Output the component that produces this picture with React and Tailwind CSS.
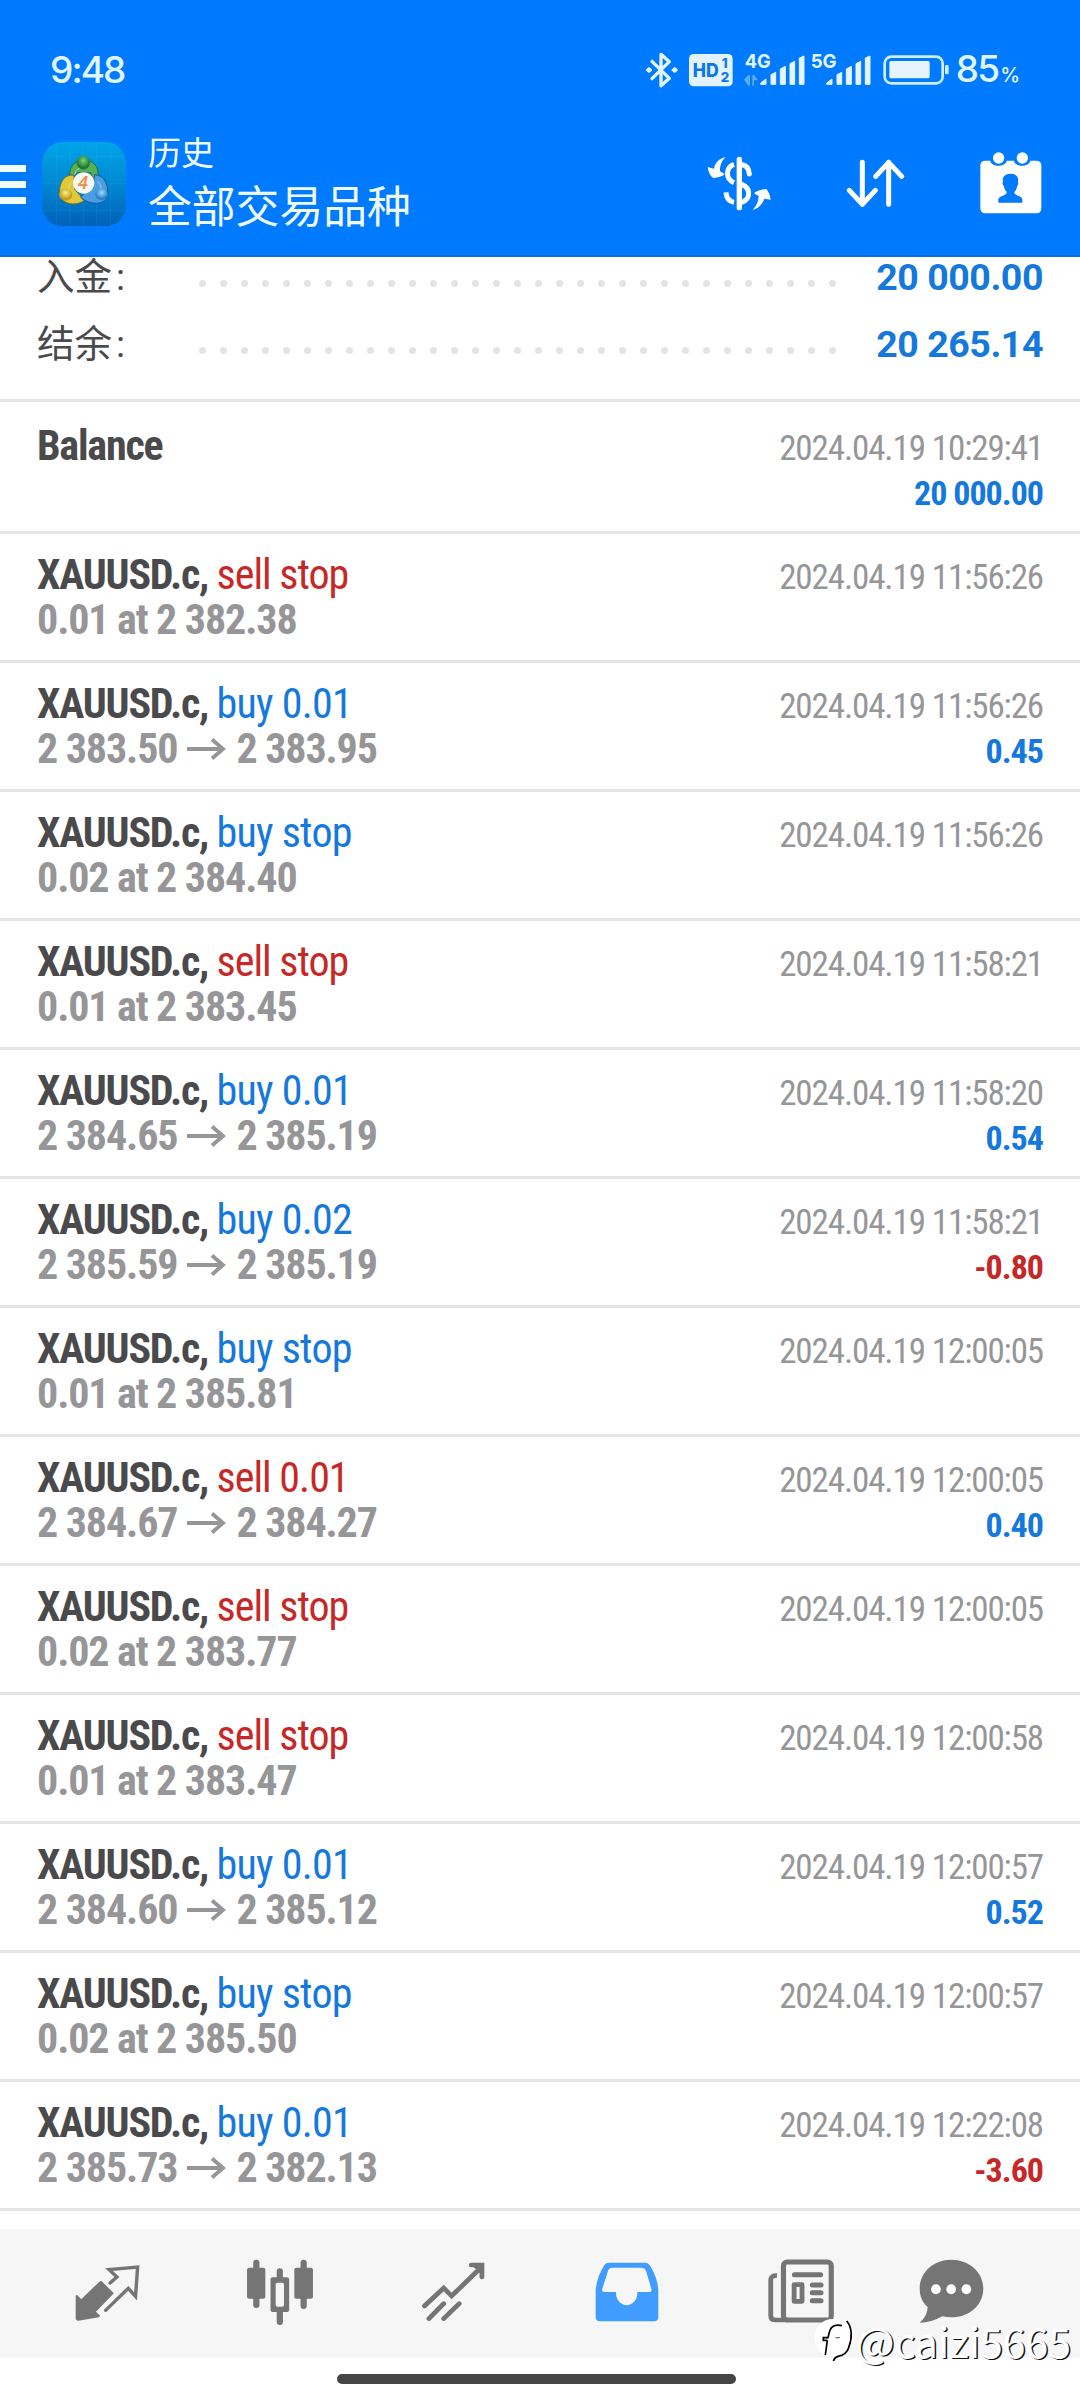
const deals = [
  { side: "sell", label: "sell stop", detail: "0.01 at 2 382.38", time: "2024.04.19 11:56:26" },
  { side: "buy", label: "buy 0.01", from: "2 383.50", to: "2 383.95", time: "2024.04.19 11:56:26", profit: "0.45" },
  { side: "buy", label: "buy stop", detail: "0.02 at 2 384.40", time: "2024.04.19 11:56:26" },
  { side: "sell", label: "sell stop", detail: "0.01 at 2 383.45", time: "2024.04.19 11:58:21" },
  { side: "buy", label: "buy 0.01", from: "2 384.65", to: "2 385.19", time: "2024.04.19 11:58:20", profit: "0.54" },
  { side: "buy", label: "buy 0.02", from: "2 385.59", to: "2 385.19", time: "2024.04.19 11:58:21", profit: "-0.80" },
  { side: "buy", label: "buy stop", detail: "0.01 at 2 385.81", time: "2024.04.19 12:00:05" },
  { side: "sell", label: "sell 0.01", from: "2 384.67", to: "2 384.27", time: "2024.04.19 12:00:05", profit: "0.40" },
  { side: "sell", label: "sell stop", detail: "0.02 at 2 383.77", time: "2024.04.19 12:00:05" },
  { side: "sell", label: "sell stop", detail: "0.01 at 2 383.47", time: "2024.04.19 12:00:58" },
  { side: "buy", label: "buy 0.01", from: "2 384.60", to: "2 385.12", time: "2024.04.19 12:00:57", profit: "0.52" },
  { side: "buy", label: "buy stop", detail: "0.02 at 2 385.50", time: "2024.04.19 12:00:57" },
  { side: "buy", label: "buy 0.01", from: "2 385.73", to: "2 382.13", time: "2024.04.19 12:22:08", profit: "-3.60" },
];

const Signal = ({ label, data }) => (
  <svg className="-mt-[8px]" width="61" height="42" viewBox="0 -24 183 126" fill="#e4f5ff">
    <text x="2" y="45" fontFamily="Inter, sans-serif" fontWeight="700" fontSize="58" textLength="78" lengthAdjust="spacingAndGlyphs">
      {label}
    </text>
    {data && <path d="M0 80 13 66V98ZM13 66H18V98H13ZM25 66H30V98H25ZM30 66 42 82H30Z" opacity="0.4" />}
    <path d="M50 94V90L66 78V94ZM81 94V65L95 58V94ZM109 94V48L124 40V94ZM138 94V32L152 25V94ZM166 94V15L180 9V94Z" strokeLinejoin="round" stroke="#e4f5ff" strokeWidth="3" />
  </svg>
);

const StatusBar = () => (
  <div className="flex h-[140px] items-center justify-between pl-[50px] pr-[60px] text-[#e0f6ff]">
    <span className="text-[37px] font-medium leading-[40px] tracking-[-1.9px]">9:48</span>
    <div className="flex items-center">
      {/* Bluetooth */}
      <svg className="mr-[-1px]" width="34" height="38" viewBox="0 0 102 114" fill="none" stroke="#e4f5ff" strokeWidth="10" strokeLinejoin="round" strokeLinecap="round">
        <path d="M21 31 73 82 48 104V10L73 32 21 83" />
        <path d="M5 57 12 51 19 57 12 63ZM82 57 89 51 96 57 89 63Z" fill="#e4f5ff" strokeWidth="5" />
      </svg>
      {/* HD badge */}
      <svg className="ml-[11px]" width="44" height="33" viewBox="0 0 132 99">
        <rect width="131" height="97" rx="14" fill="#e2f3ff" />
        <g fill="#0b78e8" fontFamily="Inter, sans-serif" fontWeight="800">
          <text x="11" y="68" fontSize="55" textLength="78" lengthAdjust="spacingAndGlyphs">HD</text>
          <text x="98" y="43" fontSize="40">1</text>
          <text x="95" y="84" fontSize="40">2</text>
        </g>
      </svg>
      <div className="ml-[11px] flex gap-[5px]">
        <Signal label="4G" data />
        <Signal label="5G" />
      </div>
      {/* Battery */}
      <svg className="ml-[12px]" width="67" height="30" viewBox="0 0 201 90">
        <rect x="5" y="5" width="174" height="80" rx="20" fill="none" stroke="#cdeeff" strokeWidth="8" />
        <rect x="19" y="18" width="121" height="52" rx="5" fill="#e6f4ff" />
        <rect x="186" y="30" width="11" height="28" rx="4" fill="#cdeeff" />
      </svg>
      <span className="ml-[6px] mt-[3px] text-[37px] font-medium leading-[40px] tracking-[-1.9px]">
        85<span className="ml-[2px] text-[20px] tracking-normal">%</span>
      </span>
    </div>
  </div>
);

const AppLogo = () => (
  <svg className="ml-4 mt-[2px]" width="84" height="84" viewBox="0 0 252 252">
    <defs>
      <linearGradient id="bg" x1="0" y1="0" x2="0" y2="1">
        <stop offset="0" stopColor="#00a5ea" />
        <stop offset="0.5" stopColor="#0088d2" />
        <stop offset="1" stopColor="#0060b8" />
      </linearGradient>
      <radialGradient id="green" cy="0.35"><stop offset="0" stopColor="#7fd070" /><stop offset="1" stopColor="#1c7a35" /></radialGradient>
      <radialGradient id="yellow" cy="0.35"><stop offset="0" stopColor="#fff08a" /><stop offset="1" stopColor="#c49a18" /></radialGradient>
      <radialGradient id="blue" cy="0.35"><stop offset="0" stopColor="#a6dcff" /><stop offset="1" stopColor="#2a80cc" /></radialGradient>
    </defs>
    <rect width="252" height="252" rx="62" fill="url(#bg)" />
    <path d="M0 44H252M0 124H252M0 205H252M44 0V252M84 0V252M124 0V252M164 0V252M205 0V252" stroke="#5ec6ff" strokeWidth="2" opacity="0.16" />
    <g strokeLinejoin="round" strokeWidth="3">
      <path d="M88 112C74 84 94 54 126 54S178 84 164 116L152 112 146 92H106Z" fill="#58ae55" stroke="#1d6b50" />
      <path d="M96 100C64 94 48 130 54 160 62 190 104 192 126 176L116 162 98 142Z" fill="#dfc83a" stroke="#6b6a2a" />
      <path d="M158 98C190 98 202 136 196 164 186 190 142 190 116 166L128 152 152 140Z" fill="#4a9fe0" stroke="#125a9c" />
    </g>
    <path d="M98 98Q104 72 126 80M82 150Q76 128 92 116M166 118Q182 132 176 150" fill="none" stroke="#d9f0c8" strokeWidth="3" opacity="0.6" />
    <ellipse cx="124" cy="62" rx="20" ry="21" fill="url(#green)" />
    <ellipse cx="71" cy="158" rx="20" ry="18" fill="url(#yellow)" />
    <ellipse cx="179" cy="157" rx="19" ry="18" fill="url(#blue)" />
    <circle cx="125" cy="123" r="32" fill="#f8f8f4" />
    <text x="123" y="142" textAnchor="middle" fontFamily="Open Sans, sans-serif" fontStyle="italic" fontWeight="600" fontSize="54" fill="#ee8c44">4</text>
  </svg>
);

const Header = () => (
  <div className="flex h-[117px] items-start border-b-2 border-[#0d6fdc]">
    <div className="mt-[25px] flex w-[26px] flex-col gap-[9px]">
      <div className="h-[7px] bg-[#f2fbff]" />
      <div className="h-[7px] bg-[#f2fbff]" />
      <div className="h-[7px] bg-[#f2fbff]" />
    </div>
    <AppLogo />
    <div className="-mt-[10px] ml-[22px] grow text-[#eefaff] [font-family:'Noto_Sans_CJK_SC',sans-serif]">
      <p className="text-[33px] leading-[42px]">历史</p>
      <p className="mt-[4px] text-[43.8px] leading-[56px]">全部交易品种</p>
    </div>
    <div className="mt-[12px] flex items-start text-white">
      {/* currency */}
      <svg className="mt-[4px]" width="64" height="55" viewBox="82 78 192 165" fill="none" stroke="currentColor" strokeWidth="16">
        <path d="M179 88V233" strokeLinecap="round" />
        <path d="M163 103C138 112 136 146 163 158M139 187C140 204 148 214 163 217" strokeWidth="15" />
        <path d="M188 104C200 106 208 116 209 132M186 163C214 174 214 208 186 217" strokeWidth="15" strokeLinecap="round" />
        <path d="M138 81C118 86 106 98 103 116L84 111C86 126 92 138 101 144 114 143 128 140 135 132L121 124C120 108 126 92 138 81Z" fill="currentColor" stroke="none" />
        <path d="M219 240C236 236 248 224 254 206L273 209C271 194 266 184 260 177 246 178 232 182 223 190L237 198C237 214 230 228 219 240Z" fill="currentColor" stroke="none" />
      </svg>
      {/* sort */}
      <svg className="ml-[75px] mt-[7px]" width="59" height="49" viewBox="498 87 177 147" fill="none" stroke="currentColor" strokeWidth="15" strokeLinecap="round" strokeLinejoin="round">
        <path d="M547 97V223M508 181 547 223 586 181M626 223V97M587 139 626 97 665 139" />
      </svg>
      {/* calendar */}
      <svg className="ml-[75px]" width="62" height="62" viewBox="899 64 186 186" fill="currentColor">
        <path d="M915 90H930C932 110 976 110 979 90H1001C1004 110 1046 110 1050 90H1068Q1083 90 1083 104V233Q1083 248 1068 248H915Q900 248 900 233V104Q900 90 915 90Z" />
        <circle cx="955" cy="82" r="17" />
        <circle cx="1026" cy="82" r="17" />
        <path d="M954 216V205C960 193 980 196 979 183 972 177 972 170 970 165 965 160 966 156 968 154 964 138 975 130 990 129 1005 129 1016 136 1013 154 1015 158 1014 162 1011 165 1009 172 1008 179 1002 184 1001 196 1020 192 1026 205V216Z" fill="#007aff" />
      </svg>
    </div>
    <div className="w-[38px]" />
  </div>
);

const SummaryRow = ({ label, value }) => (
  <div className="flex h-[67px] shrink-0 items-center pl-[37px] pr-[37px] leading-[38px]">
    <span className="w-[162px] text-[37.5px] text-[#4a4a4c] [font-family:Roboto,'Noto_Sans_CJK_SC',sans-serif]">
      {label}
      <span className="ml-[4px]">:</span>
    </span>
    <div className="mt-[14px] flex w-[637px] justify-between">
      {Array.from({ length: 31 }, (_, i) => (
        <span key={i} className="size-[7px] rounded-full bg-[#e4e4e4]" />
      ))}
    </div>
    <span className="ml-auto text-[37.5px] font-bold tracking-[-0.45px] text-[#1478dc]">{value}</span>
  </div>
);

const Arrow = () => (
  <svg className="ml-[9px] mr-[10px]" width="40" height="22" viewBox="0 0 40 22" fill="none" stroke="currentColor" strokeWidth="3.8">
    <path d="M1 11H37M26 1.5 37 11 26 20.5" />
  </svg>
);

const DealRow = ({ deal }) => (
  <div className="h-[129px] border-b-3 border-[#e4e4e4] pl-[37px] pr-[37px] pt-[18px] font-stretch-condensed">
    <div className="flex h-[45px] items-baseline justify-between leading-[45px]">
      <p className="text-[42px] font-bold tracking-[-1.2px] text-[#4a4a4c]">
        XAUUSD.c,{" "}
        <span className={deal.side === "buy" ? "font-normal tracking-[-0.75px] text-[#1478dc]" : "font-normal tracking-[-1px] text-[#c62828]"}>
          {deal.label}
        </span>
      </p>
      <p className="text-[35px] tracking-[-1.1px] text-[#969698]">{deal.time}</p>
    </div>
    <div className="flex h-[45px] items-baseline justify-between leading-[45px]">
      <p className="flex items-center text-[42px] font-bold tracking-[-1.1px] text-[#969698]">
        {deal.detail || (
          <>
            {deal.from}
            <Arrow />
            {deal.to}
          </>
        )}
      </p>
      {deal.profit && (
        <p
          className={
            deal.profit.startsWith("-")
              ? "text-[34px] font-bold tracking-[-1px] text-[#c62828]"
              : "text-[34px] font-bold tracking-[-1px] text-[#1478dc]"
          }
        >
          {deal.profit}
        </p>
      )}
    </div>
  </div>
);

const TabBar = () => (
  <div className="flex h-[129px] items-start bg-[#f6f6f6] pl-[75px] pt-[30px] text-[#757575]">
    {/* quotes */}
    <svg className="mt-[6px]" width="65" height="57" viewBox="218 226 189 171" preserveAspectRatio="none" fill="currentColor">
      <path d="M295 274 331 311 279 366 291 378 288 383 228 393Q220 393 220 386V317H225L236 329 288 277Q292 273 295 274Z" />
      <path d="M320 280 340 262 317 240 400 232 394 320 373 296 307 362" fill="none" stroke="currentColor" strokeWidth="10" strokeLinecap="round" />
    </svg>
    {/* chart */}
    <svg className="ml-[106px]" width="68" height="68" viewBox="715 208 197 204" preserveAspectRatio="none" fill="currentColor">
      <path d="M745 219V346M882 219V349M813 245V272M813 358V397" stroke="currentColor" strokeWidth="18" strokeLinecap="round" />
      <rect x="718" y="234" width="53" height="93" rx="6" />
      <rect x="855" y="234" width="54" height="93" rx="6" />
      <rect x="786" y="263" width="54" height="104" rx="6" />
      <rect x="801" y="279" width="24" height="72" rx="5" fill="#f6f6f6" />
    </svg>
    {/* trade */}
    <svg className="ml-[107px] mt-[3px]" width="64" height="61" viewBox="1222 216 186 183" preserveAspectRatio="none" fill="none" stroke="currentColor" strokeWidth="14" strokeLinecap="round">
      <path d="M1232 348 1288 294 1311 318 1395 234M1245 386 1288 341M1288 386 1333 341" />
      <path d="M1368 225H1399V261" />
      <path d="M1372 229 1396 222V252Z" fill="currentColor" stroke="none" />
    </svg>
    {/* history */}
    <svg className="ml-[110px] mt-[3px]" width="64" height="60" viewBox="160 217 187 178" preserveAspectRatio="none">
      <path fillRule="evenodd" fill="#409cff" d="M202 219H306Q316 219 321 228 344 266 345 303V381Q345 393 333 393H174Q162 393 162 381V303C163 276 173 250 186 228Q191 219 202 219ZM211 234Q201 234 198 243L181 298Q179 306 187 306H221C221 358 284 358 284 306H320Q327 306 325 298L310 246Q306 234 296 234Z" />
    </svg>
    {/* news */}
    <svg className="ml-[109px]" width="66" height="65" viewBox="664 209 192 195" preserveAspectRatio="none" fill="none" stroke="currentColor">
      <rect x="709" y="218" width="139" height="174" rx="11" strokeWidth="15" />
      <path d="M690 259Q672 258 672 272V379Q672 392 686 392H720" strokeWidth="14" />
      <path d="M741 256H817M793 287H818M793 310H818M793 334H818" strokeWidth="15" strokeLinecap="round" />
      <rect x="740" y="286" width="23" height="50" strokeWidth="14" strokeLinejoin="round" />
    </svg>
    {/* messages */}
    <svg className="ml-[85px]" width="65" height="65" viewBox="1100 209 188 195" preserveAspectRatio="none" fill="currentColor">
      <path d="M1193 211C1245 211 1286 248 1286 298 1286 347 1245 384 1193 384 1184 384 1175 383 1167 381 1147 393 1125 400 1102 400 1116 388 1124 372 1125 353 1110 339 1102 320 1102 298 1102 248 1143 211 1193 211Z" />
      <g fill="#ffffff">
        <ellipse cx="1149" cy="300" rx="14" ry="15" />
        <ellipse cx="1193" cy="300" rx="14" ry="15" />
        <ellipse cx="1237" cy="300" rx="14" ry="15" />
      </g>
    </svg>
  </div>
);

const Watermark = () => (
  <div className="absolute bottom-[35px] right-[9px] flex items-center">
    <svg width="42" height="46" viewBox="0 0 126 138">
      <rect x="2" y="6" width="116" height="112" rx="54" fill="#ffffff" />
      <path d="M84 26C66 22 52 28 47 42L42 62H28V70H40M40 70 34 114" fill="none" stroke="#000" strokeWidth="5" />
      <path d="M98 12C114 30 116 62 104 92 98 112 82 116 72 118 64 120 60 126 58 132" fill="none" stroke="#000" strokeWidth="5" />
      <path d="M64 62H78" stroke="#555" strokeWidth="3" />
    </svg>
    <span className="text-[41px] leading-[50px] text-white [font-family:'Noto_Sans_CJK_SC',sans-serif] [text-shadow:1.5px_1px_0_#111]">
      @caizi5665
    </span>
  </div>
);

const App = () => {
  return (
    <div className="relative h-[2400px] w-[1080px] overflow-hidden bg-white [font-family:Roboto,sans-serif]">
      <div className="bg-[#007aff] [font-family:Inter,sans-serif]">
        <StatusBar />
        <Header />
      </div>

      {/* Account summary, scrolled under the header */}
      <div className="flex h-[145px] flex-col justify-end overflow-hidden border-b-3 border-[#e4e4e4] pb-[22px]">
        <SummaryRow label="入金" value="20 000.00" />
        <SummaryRow label="结余" value="20 265.14" />
      </div>

      {/* Deals */}
      <div className="h-[132px] border-b-3 border-[#e4e4e4] pl-[37px] pr-[37px] pt-[21px] font-stretch-condensed">
        <div className="flex h-[45px] items-baseline justify-between leading-[45px]">
          <p className="text-[42px] font-bold tracking-[-1.2px] text-[#4a4a4c]">Balance</p>
          <p className="text-[35px] tracking-[-1.1px] text-[#969698]">2024.04.19 10:29:41</p>
        </div>
        <p className="mt-[3px] text-right text-[34px] font-bold leading-[45px] tracking-[-1px] text-[#1478dc]">20 000.00</p>
      </div>
      {deals.map((deal, index) => (
        <DealRow key={index} deal={deal} />
      ))}

      <div className="h-[18px]" />
      <TabBar />
      <div className="flex h-[42px] items-center justify-center pr-[7px]">
        <div className="h-[10px] w-[399px] rounded-full bg-[#454545]" />
      </div>
      <Watermark />
    </div>
  );
};

export default App;
